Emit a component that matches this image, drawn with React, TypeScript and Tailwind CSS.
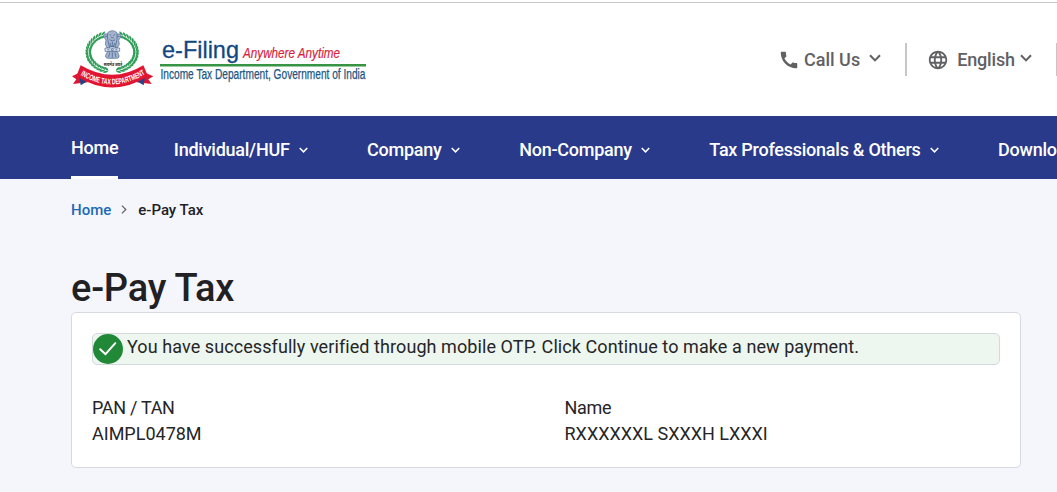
import { MdCall, MdLanguage } from "react-icons/md";

interface NavItem {
  label: string;
  hasMenu: boolean;
}

const navItems: NavItem[] = [
  { label: "Individual/HUF", hasMenu: true },
  { label: "Company", hasMenu: true },
  { label: "Non-Company", hasMenu: true },
  { label: "Tax Professionals & Others", hasMenu: true },
  { label: "Downloads", hasMenu: false },
];

const Chevron = ({ className }: { className: string }) => (
  <svg
    viewBox="0 0 12 8"
    fill="none"
    stroke="currentColor"
    strokeWidth="2"
    className={`shrink-0 ${className}`}
  >
    <path d="M1 1.2 6 6.4 11 1.2" />
  </svg>
);

// Leaves of one half of the wreath, from the ribbon up to the top
const leaves = Array.from({ length: 18 }, (_, i) => {
  const angle = ((104 + i * 8.5) * Math.PI) / 180;
  return {
    x: 156 + 71 * Math.cos(angle),
    y: 97 + 56 * Math.sin(angle),
    turn: 104 + i * 8.5 + 90,
  };
});

const Wreath = () => (
  <g>
    {leaves.map((leaf) => (
      <g
        key={leaf.turn}
        transform={`translate(${leaf.x} ${leaf.y}) rotate(${leaf.turn})`}
        fill="#2f9c57"
      >
        <path d="M-7 0Q0 -11 9 -8Q6 0 -7 0Z" />
        <path d="M-7 1Q0 12 9 8Q6 1 -7 1Z" />
      </g>
    ))}
  </g>
);

const Emblem = () => (
  <svg viewBox="0 0 330 240" className="h-20 w-[110px] shrink-0">
    <Wreath />
    <g transform="translate(313 0) scale(-1 1)">
      <Wreath />
    </g>

    {/* Lion capital */}
    <g fill="#a3b3cc" stroke="#4a6594" strokeWidth="2">
      <path d="M143 38Q157 26 171 38L173 60L166 80H148L141 60Z" />
      <path d="M142 42Q129 39 132 52L138 60L136 73L142 84H149L143 58Z" />
      <path d="M172 42Q185 39 182 52L176 60L178 73L172 84H165L171 58Z" />
      <path d="M135 84H179V94H135Z" fill="#dce4ef" />
      <path d="M143 94H171L175 101Q182 115 168 115H146Q132 115 139 101Z" />
    </g>
    <g fill="none" stroke="#3d5a8c" strokeWidth="2">
      <path d="M149 43L154 47M165 43L160 47M153 53H161M149 59Q157 67 165 59" />
      <path d="M150 69L154 81M157 66V81M164 69L160 81M135 49L141 50M179 49L173 50" />
      <circle cx="157" cy="89" r="3" />
      <path d="M142 89H148M166 89H172M149 97L146 111M157 97V113M165 97L168 111" />
    </g>
    <text
      x="159"
      y="138"
      textAnchor="middle"
      textLength="56"
      lengthAdjust="spacingAndGlyphs"
      fill="#222"
      className="font-['Noto_Sans_Devanagari','Noto_Sans',sans-serif] text-[14px] font-bold"
    >
      सत्यमेव जयते
    </text>

    {/* Ribbon */}
    <path d="M61 157L36 169L49 178L39 192L83 187Z" fill="#dc1732" />
    <path d="M252 157L280 169L265 178L275 192L230 187Z" fill="#dc1732" />
    <path d="M58 169L87 181L62 196Z" fill="#24428a" />
    <path d="M255 169L226 181L251 196Z" fill="#24428a" />
    <path
      d="M62 136Q157 193 250 136L264 169Q157 236 49 169Z"
      fill="#e11532"
    />
    <path id="ribbon-line" d="M58 163Q157 224 258 161" fill="none" />
    <text
      fill="white"
      className="font-['Liberation_Sans_Narrow','Liberation_Sans',sans-serif] text-[24px] font-bold"
    >
      <textPath
        href="#ribbon-line"
        startOffset="2%"
        textLength="205"
        lengthAdjust="spacingAndGlyphs"
      >
        INCOME TAX DEPARTMENT
      </textPath>
    </text>
  </svg>
);

const Logo = () => (
  <div className="flex items-start">
    <Emblem />
    <svg
      viewBox="0 0 210 70"
      className="-ml-3 mt-[5px] h-[70px] w-[210px] overflow-visible font-['Liberation_Sans',Arial,sans-serif]"
    >
      <text
        x="4"
        y="32.7"
        fill="#124783"
        stroke="#124783"
        strokeWidth=".3"
        textLength="77"
        lengthAdjust="spacingAndGlyphs"
        className="text-[24.5px]"
      >
        e-Filing
      </text>
      <text
        x="85"
        y="32.5"
        fill="#d81e3c"
        stroke="#d81e3c"
        strokeWidth=".2"
        textLength="97"
        lengthAdjust="spacingAndGlyphs"
        className="text-[15.5px] italic"
      >
        Anywhere Anytime
      </text>
      <path d="M2 40.2H208" stroke="#389445" strokeWidth="2.4" />
      <text
        x="2.5"
        y="54"
        fill="#215682"
        stroke="#215682"
        strokeWidth=".25"
        textLength="205"
        lengthAdjust="spacingAndGlyphs"
        className="text-[13.8px]"
      >
        Income Tax Department, Government of India
      </text>
    </svg>
  </div>
);

const Header = () => (
  <header className="mt-0.5 -mb-0.5 flex h-[116px] items-start border-t border-[#c9c9cb] bg-white pl-[60px] pt-[17px]">
    <Logo />
    <div className="ml-[410px] mt-[23px] flex h-[33px] shrink-0 items-center text-lg font-medium text-[#616163]">
      <MdCall className="size-[22px] shrink-0" />
      <span className="ml-[4px] whitespace-nowrap">Call Us</span>
      <Chevron className="mb-1 ml-[9px] h-2 w-3" />
      <span className="ml-6 h-[33px] w-0.5 shrink-0 bg-[#c6c6c8]" />
      <MdLanguage className="ml-5 size-[22px] shrink-0" />
      <span className="ml-[8px] tracking-[-0.15px]">English</span>
      <Chevron className="mb-1 ml-[5px] h-2 w-3" />
      <span className="ml-6 h-[33px] w-0.5 shrink-0 bg-[#c6c6c8]" />
    </div>
  </header>
);

const NavBar = () => (
  <nav className="flex h-[63px] overflow-hidden bg-[#2a3a8b] pl-[71px] text-lg font-medium tracking-[-0.25px] text-white">
    <a className="mr-[55.5px] h-full shrink-0 border-b-[3px] border-white pt-[18px]">
      Home
    </a>
    {navItems.map((item) => (
      <a
        key={item.label}
        className="mr-[59px] flex h-full shrink-0 items-center whitespace-nowrap pt-1"
      >
        {item.label}
        {item.hasMenu && <Chevron className="ml-[9.5px] h-[6px] w-[9px]" />}
      </a>
    ))}
  </nav>
);

const Breadcrumb = () => (
  <div className="flex h-[62px] items-center text-[15px] font-medium text-[#212124]">
    <a className="text-[#1c69b5]">Home</a>
    <svg
      viewBox="0 0 6 10"
      fill="none"
      stroke="#626268"
      strokeWidth="1.4"
      className="mb-0.5 ml-[10px] mr-[11px] h-[9px] w-[6px]"
    >
      <path d="M.7.7 5 5 .7 9.3" />
    </svg>
    <span>e-Pay Tax</span>
  </div>
);

const SuccessMessage = () => (
  <div className="flex h-8 items-center rounded-[5px] border border-[#d3dadd] bg-[#edf6ef]">
    <svg viewBox="0 0 30 30" className="size-[30px] shrink-0">
      <circle cx="15" cy="15" r="15" fill="#218838" />
      <path
        d="M7.2 15.3 12.5 20.2 22.3 9.2"
        fill="none"
        stroke="white"
        strokeWidth="2"
        strokeLinecap="round"
        strokeLinejoin="round"
      />
    </svg>
    <span className="mb-1 ml-1 tracking-[0.08px]">
      You have successfully verified through mobile OTP. Click Continue to make
      a new payment.
    </span>
  </div>
);

const Field = ({ label, value }: { label: string; value: string }) => (
  <div>
    <p className="tracking-[-0.3px]">{label}</p>
    <p>{value}</p>
  </div>
);

const App = () => {
  return (
    <div className="h-[492px] w-[1057px] overflow-hidden bg-[#f5f6fb] font-[Roboto,sans-serif]">
      <div className="flow-root bg-white">
        <Header />
      </div>
      <NavBar />
      <main className="w-[1021px] pl-[71px]">
        <Breadcrumb />
        <h1 className="mt-[23px] text-[38px] font-medium leading-[48px] tracking-[-0.2px] text-[#212124]">
          e-Pay Tax
        </h1>
        <section className="h-[156px] rounded-[5px] border border-[#d6d9e1] bg-white px-5 pt-5 text-lg leading-[26px] text-[#252527]">
          <SuccessMessage />
          <div className="mt-[30px] grid grid-cols-[472.5px_1fr]">
            <Field label="PAN / TAN" value="AIMPL0478M" />
            <Field label="Name" value="RXXXXXXL SXXXH LXXXI" />
          </div>
        </section>
      </main>
    </div>
  );
};

export default App;
